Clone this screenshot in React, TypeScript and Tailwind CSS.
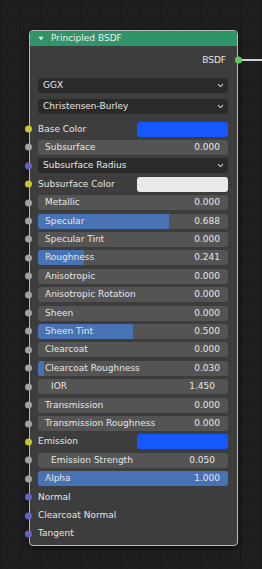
import React from 'react'

type Row =
  | { kind: 'color'; label: string; swatch: string }
  | { kind: 'slider'; label: string; value: string; fill: number }
  | { kind: 'number'; label: string; value: string }
  | { kind: 'menu'; label: string }
  | { kind: 'socket'; label: string }

const rows: Row[] = [
  { kind: 'color', label: 'Base Color', swatch: 'bg-[#1558ff]' },
  { kind: 'slider', label: 'Subsurface', value: '0.000', fill: 0 },
  { kind: 'menu', label: 'Subsurface Radius' },
  { kind: 'color', label: 'Subsurface Color', swatch: 'bg-[#e9e9e9]' },
  { kind: 'slider', label: 'Metallic', value: '0.000', fill: 0 },
  { kind: 'slider', label: 'Specular', value: '0.688', fill: 0.688 },
  { kind: 'slider', label: 'Specular Tint', value: '0.000', fill: 0 },
  { kind: 'slider', label: 'Roughness', value: '0.241', fill: 0.241 },
  { kind: 'slider', label: 'Anisotropic', value: '0.000', fill: 0 },
  { kind: 'slider', label: 'Anisotropic Rotation', value: '0.000', fill: 0 },
  { kind: 'slider', label: 'Sheen', value: '0.000', fill: 0 },
  { kind: 'slider', label: 'Sheen Tint', value: '0.500', fill: 0.5 },
  { kind: 'slider', label: 'Clearcoat', value: '0.000', fill: 0 },
  { kind: 'slider', label: 'Clearcoat Roughness', value: '0.030', fill: 0.03 },
  { kind: 'number', label: 'IOR', value: '1.450' },
  { kind: 'slider', label: 'Transmission', value: '0.000', fill: 0 },
  { kind: 'slider', label: 'Transmission Roughness', value: '0.000', fill: 0 },
  { kind: 'color', label: 'Emission', swatch: 'bg-[#1558ff]' },
  { kind: 'number', label: 'Emission Strength', value: '0.050' },
  { kind: 'slider', label: 'Alpha', value: '1.000', fill: 1 },
  { kind: 'socket', label: 'Normal' },
  { kind: 'socket', label: 'Clearcoat Normal' },
  { kind: 'socket', label: 'Tangent' },
]

function socketColor(r: Row) {
  if (r.kind === 'color') return 'bg-[#c7c729]'
  if (r.kind === 'menu' || r.kind === 'socket') return 'bg-[#6363c7]'
  return 'bg-[#a1a1a1]'
}

function Chevron() {
  return (
    <svg width="7" height="5" viewBox="0 0 7 5" className="shrink-0">
      <path d="M1 1.2 L3.5 3.6 L6 1.2" fill="none" stroke="#d4d4d4" strokeWidth="1.1" />
    </svg>
  )
}

function Dropdown({ label }: { label: string }) {
  return (
    <div className="h-[15px] w-full rounded-[3px] bg-[#2a2a2a] flex items-center justify-between pl-[5px] pr-[4px]">
      <span>{label}</span>
      <Chevron />
    </div>
  )
}

function Widget({ r }: { r: Row }) {
  switch (r.kind) {
    case 'color':
      return (
        <div className="flex items-center w-full h-[15px]">
          <span className="flex-1">{r.label}</span>
          <div className={`w-[91px] h-[15px] rounded-[3px] ${r.swatch}`} />
        </div>
      )
    case 'slider':
      return (
        <div className="relative w-full h-[15px] rounded-[3px] bg-[#545454] overflow-hidden">
          <div className="absolute left-0 top-0 h-full bg-[#4772b3]" style={{ width: `${r.fill * 100}%` }} />
          <div className="relative h-full flex items-center justify-between pl-[7px] pr-[8px]">
            <span>{r.label}</span>
            <span>{r.value}</span>
          </div>
        </div>
      )
    case 'number':
      return (
        <div className="w-full h-[15px] rounded-[3px] bg-[#545454] flex items-center justify-between pl-[13px] pr-[13px]">
          <span>{r.label}</span>
          <span>{r.value}</span>
        </div>
      )
    case 'menu':
      return <Dropdown label={r.label} />
    case 'socket':
      return <span>{r.label}</span>
  }
}

export default function App() {
  return (
    <div className="relative w-[262px] h-[569px] overflow-hidden bg-[#1f1f1f] bg-[linear-gradient(to_right,#191919_1px,transparent_1px),linear-gradient(to_bottom,#191919_1px,transparent_1px)] bg-size-[20px_20px] text-[#e6e6e6] text-[9px] leading-none font-['DejaVu_Sans',sans-serif]">
      {/* wire out of BSDF */}
      <div className="absolute left-[238px] top-[59px] w-[24px] h-[2px] bg-[#d2d2d2]" />

      {/* node */}
      <div className="absolute left-[29px] top-[30px] w-[209px] h-[516px] rounded-[4px] border border-[#b9b9b9] bg-[#3d3d3d] shadow-[0_2px_6px_rgba(0,0,0,0.6)] flex flex-col">
        <div className="h-[15px] rounded-t-[3px] bg-[#2f946a] flex items-center pl-[8px] gap-[7px] text-[#f0f0f0]">
          <svg width="6" height="5" viewBox="0 0 6 5">
            <path d="M0.5 0.8 H5.5 L3 4.4 Z" fill="#e8e8e8" />
          </svg>
          <span>Principled BSDF</span>
        </div>

        {/* output */}
        <div className="relative h-[20px] mt-[4px] flex items-center justify-end pr-[11px]">
          <span>BSDF</span>
          <div className="absolute right-[-5px] top-1/2 -translate-y-1/2 w-[7px] h-[7px] rounded-full bg-[#63c763]" />
        </div>

        {/* distribution menus */}
        <div className="flex flex-col gap-[6px] mt-[8px] pl-[8px] pr-[9px]">
          <Dropdown label="GGX" />
          <Dropdown label="Christensen-Burley" />
        </div>

        {/* inputs */}
        <div className="flex flex-col mt-[5.8px]">
          {rows.map(r => (
            <div key={r.label} className="relative h-[18.42px] flex items-center pl-[8px] pr-[9px]">
              <div className={`absolute left-[-5px] top-1/2 -translate-y-1/2 w-[7px] h-[7px] rounded-full ${socketColor(r)}`} />
              <Widget r={r} />
            </div>
          ))}
        </div>
      </div>
    </div>
  )
}
